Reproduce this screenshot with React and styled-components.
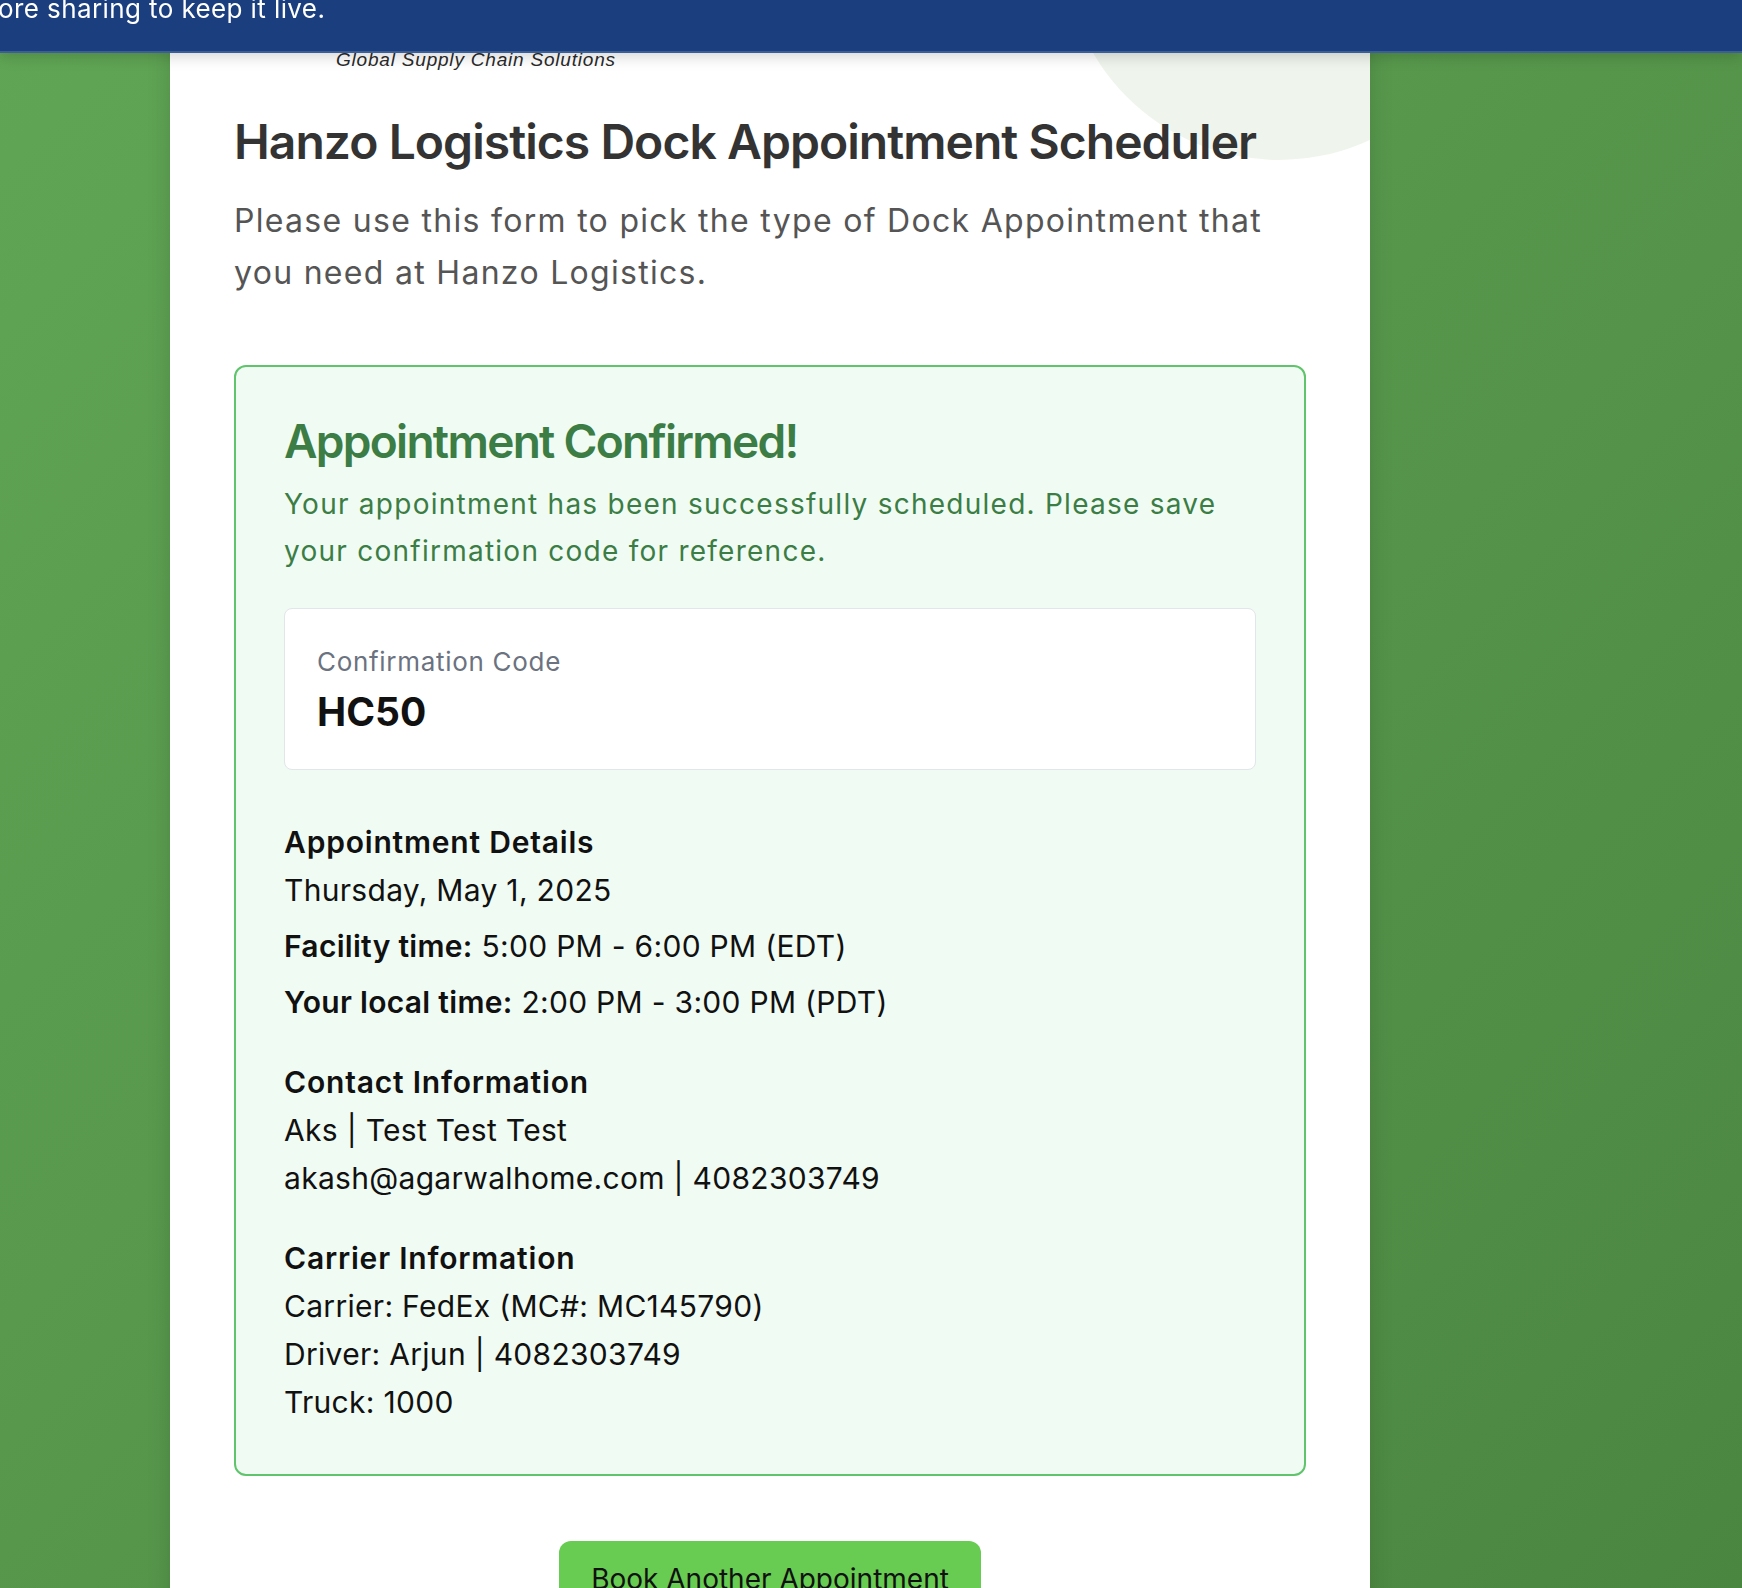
import React from 'react'
import styled, { createGlobalStyle } from 'styled-components'

const GlobalStyle = createGlobalStyle`
  html, body {
    margin: 0;
    padding: 0;
    height: 100%;
    overflow: hidden;
  }
  body {
    font-family: Inter, "Noto Sans", sans-serif;
    background: linear-gradient(135deg, #60a555 0%, #56964b 50%, #4b8641 100%);
  }
  * { box-sizing: border-box; }
`

const details = [
  {
    title: 'Appointment Details',
    rows: [
      { text: 'Thursday, May 1, 2025' },
      { label: 'Facility time:', text: '5:00 PM - 6:00 PM (EDT)', spaced: true },
      { label: 'Your local time:', text: '2:00 PM - 3:00 PM (PDT)', spaced: true },
    ],
  },
  {
    title: 'Contact Information',
    rows: [
      { text: 'Aks | Test Test Test' },
      { text: 'akash@agarwalhome.com | 4082303749' },
    ],
  },
  {
    title: 'Carrier Information',
    rows: [
      { text: 'Carrier: FedEx (MC#: MC145790)' },
      { text: 'Driver: Arjun | 4082303749' },
      { text: 'Truck: 1000' },
    ],
  },
]

const App = () => {
  return (
    <>
      <GlobalStyle />
      <Banner>
        <BannerText>ore sharing to keep it live.</BannerText>
      </Banner>
      <Page>
        <Card>
          <Blob />
          <Content>
            <Logo>
              <Tagline>Global Supply Chain Solutions</Tagline>
            </Logo>
            <Title>Hanzo Logistics Dock Appointment Scheduler</Title>
            <Intro>
              Please use this form to pick the type of Dock Appointment that
              you need at Hanzo Logistics.
            </Intro>

            <SuccessBox>
              <SuccessTitle>Appointment Confirmed!</SuccessTitle>
              <SuccessText>
                Your appointment has been successfully scheduled. Please save
                your confirmation code for reference.
              </SuccessText>

              <CodeBox>
                <CodeLabel>Confirmation Code</CodeLabel>
                <CodeValue>HC50</CodeValue>
              </CodeBox>

              {details.map((section, i) => (
                <Section key={section.title} first={i === 0}>
                  <SectionTitle>{section.title}</SectionTitle>
                  {section.rows.map((row, j) => (
                    <Row key={j} spaced={row.spaced}>
                      {row.label && <strong>{row.label}</strong>}
                      {row.label ? ' ' : ''}
                      {row.text}
                    </Row>
                  ))}
                </Section>
              ))}
            </SuccessBox>

            <ButtonRow>
              <Button>Book Another Appointment</Button>
            </ButtonRow>
          </Content>
        </Card>
      </Page>
    </>
  )
}

export default App

const Banner = styled.div`
  position: fixed;
  top: 0;
  left: 0;
  right: 0;
  height: 53px;
  background: #1b3f7e;
  border-bottom: 2px solid #3b5e96;
  box-shadow: 0 3px 14px rgba(0, 0, 0, 0.18);
  overflow: hidden;
  z-index: 10;
`

const BannerText = styled.div`
  margin: -6px 0 0 -2px;
  color: #fff;
  font-size: 26px;
  line-height: 30px;
  letter-spacing: 0.4px;
  white-space: nowrap;
`

const Page = styled.div`
  padding-left: 170px;
`

const Card = styled.div`
  position: relative;
  width: 1200px;
  min-height: 1700px;
  background: #fff;
  overflow: hidden;
  box-shadow: 0 0 22px rgba(0, 0, 0, 0.14);
`

const Blob = styled.div`
  position: absolute;
  top: -270px;
  right: -124px;
  width: 430px;
  height: 430px;
  border-radius: 50%;
  background: #eff5ed;
`

const Content = styled.div`
  position: relative;
  padding: 0 64px 60px;
`

const Logo = styled.div`
  padding: 48px 0 0 102px;
`

const Tagline = styled.div`
  font-family: "Liberation Sans", Arial, sans-serif;
  font-style: italic;
  font-size: 19px;
  line-height: 23px;
  color: #2a2a2a;
  letter-spacing: 0.8px;
`

const Title = styled.h1`
  margin: 42px 0 0;
  font-size: 48px;
  line-height: 1.2;
  font-weight: 600;
  color: #333;
  letter-spacing: -0.95px;
`

const Intro = styled.p`
  margin: 24px 0 0;
  font-size: 32px;
  line-height: 52px;
  color: #555;
  letter-spacing: 1.3px;
`

const SuccessBox = styled.div`
  margin-top: 66px;
  padding: 46px 48px 48px;
  background: #f0fbf3;
  border: 2px solid #5fc46b;
  border-radius: 12px;
`

const SuccessTitle = styled.h2`
  margin: 0;
  font-size: 46px;
  line-height: 56px;
  font-weight: 600;
  color: #3b7d45;
  letter-spacing: -1.7px;
`

const SuccessText = styled.p`
  margin: 12px 0 0;
  font-size: 28px;
  line-height: 47px;
  color: #3b7d45;
  letter-spacing: 1.25px;
`

const CodeBox = styled.div`
  margin-top: 33px;
  padding: 35px 32px 34px;
  background: #fff;
  border: 1px solid #e2e5e9;
  border-radius: 8px;
`

const CodeLabel = styled.div`
  font-size: 26px;
  line-height: 36px;
  color: #6b7280;
  letter-spacing: 0.7px;
`

const CodeValue = styled.div`
  margin-top: 9px;
  font-size: 39px;
  line-height: 46px;
  font-weight: 700;
  color: #111;
`

const Section = styled.div`
  margin-top: ${(p) => (p.first ? '48px' : '32px')};
  color: #111;
`

const SectionTitle = styled.h3`
  margin: 0;
  font-size: 30px;
  line-height: 48px;
  font-weight: 600;
  letter-spacing: 0.8px;
`

const Row = styled.p`
  margin: ${(p) => (p.spaced ? '8px' : '0')} 0 0;
  font-size: 30px;
  line-height: 48px;
  letter-spacing: 0.3px;

  strong {
    font-weight: 600;
  }
`

const ButtonRow = styled.div`
  display: flex;
  justify-content: center;
  margin-top: 65px;
`

const Button = styled.button`
  padding: 22px 32px;
  border: none;
  border-radius: 12px;
  background: #68cc52;
  color: #111;
  font-family: Inter, "Noto Sans", sans-serif;
  font-size: 28px;
  line-height: 1.2;
  cursor: pointer;
`
